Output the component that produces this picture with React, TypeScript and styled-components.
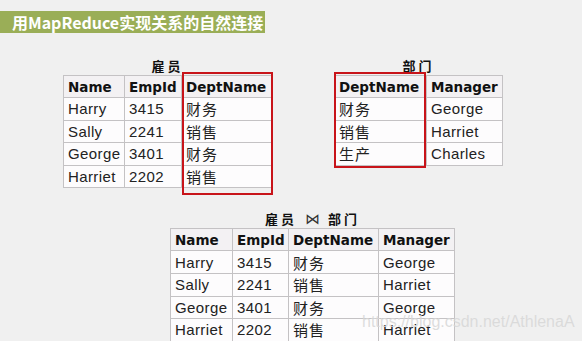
import React from "react";
import styled, { createGlobalStyle } from "styled-components";

const Global = createGlobalStyle`
  html, body { margin: 0; padding: 0; background: #f0f0f0; }
  body { width: 582px; height: 341px; overflow: hidden; }
`;

const Page = styled.div`
  position: relative;
  width: 582px;
  height: 341px;
  padding-top: 11px;
  box-sizing: border-box;
  background: #f0f0f0;
  font-family: "Liberation Sans", "Noto Sans CJK SC", sans-serif;
`;

const TitleBar = styled.div`
  width: 253px;
  height: 22px;
  padding-left: 12px;
  background: #9aae57;
  color: #ffffff;
  font-family: "Noto Sans CJK SC", sans-serif;
  font-weight: 700;
  font-size: 16px;
  line-height: 22px;
  white-space: nowrap;
`;

const Row = styled.div<{ $left: number; $top: number; $gap?: number }>`
  display: flex;
  align-items: flex-start;
  padding-left: ${(p) => p.$left}px;
  margin-top: ${(p) => p.$top}px;
  gap: ${(p) => p.$gap ?? 0}px;
`;

const Block = styled.div`
  display: flex;
  flex-direction: column;
  align-items: center;
`;

const Caption = styled.div`
  height: 16px;
  margin-bottom: 1px;
  font-family: "Noto Sans CJK SC", sans-serif;
  font-weight: 700;
  font-size: 13px;
  line-height: 16px;
  color: #111;
  letter-spacing: 3px;
  display: flex;
  align-items: center;
  gap: 8px;
`;

const Bowtie = styled.span`
  font-family: "DejaVu Sans", sans-serif;
  font-weight: 400;
  font-size: 15px;
  color: #333;
  letter-spacing: 0;
`;

const TableWrap = styled.div`
  position: relative;
`;

const Table = styled.table`
  border-collapse: collapse;
  table-layout: fixed;
  background: #fdfcfd;
`;

const Th = styled.th`
  height: 21px;
  padding: 0 0 0 4px;
  border: 1px solid #c4c2c4;
  background: #f3f1f3;
  font-family: "DejaVu Sans", sans-serif;
  font-weight: 700;
  font-size: 13.5px;
  color: #111;
  text-align: left;
  white-space: nowrap;
  overflow: hidden;
`;

const Td = styled.td<{ $cjk?: boolean }>`
  height: 21.6px;
  padding: 0 0 0 4px;
  border: 1px solid #c4c2c4;
  font-family: ${(p) =>
    p.$cjk
      ? `"Noto Sans CJK SC", sans-serif`
      : `"Liberation Sans", "Noto Sans CJK SC", sans-serif`};
  font-size: 15px;
  letter-spacing: ${(p) => (p.$cjk ? 1 : 0.4)}px;
  color: #222;
  white-space: nowrap;
  overflow: hidden;
  vertical-align: middle;
`;

const Highlight = styled.div<{ $l: number; $t: number; $w: number; $h: number }>`
  position: absolute;
  left: ${(p) => p.$l}px;
  top: ${(p) => p.$t}px;
  width: ${(p) => p.$w}px;
  height: ${(p) => p.$h}px;
  box-sizing: border-box;
  border: 2px solid #c8141a;
  pointer-events: none;
`;

const Watermark = styled.div`
  position: absolute;
  left: 362px;
  top: 313px;
  font-family: "Liberation Sans", sans-serif;
  font-size: 16px;
  color: rgba(215, 215, 215, 0.85);
  white-space: nowrap;
`;

const isCjk = (s: string) => /[\u4e00-\u9fff]/.test(s);

type TableProps = { widths: number[]; head: string[]; rows: string[][] };

const DataTable: React.FC<TableProps> = ({ widths, head, rows }) => (
  <Table>
    <colgroup>
      {widths.map((w, i) => (
        <col key={i} style={{ width: w }} />
      ))}
    </colgroup>
    <thead>
      <tr>
        {head.map((h) => (
          <Th key={h}>{h}</Th>
        ))}
      </tr>
    </thead>
    <tbody>
      {rows.map((r, i) => (
        <tr key={i}>
          {r.map((c, j) => (
            <Td key={j} $cjk={isCjk(c)}>
              {c}
            </Td>
          ))}
        </tr>
      ))}
    </tbody>
  </Table>
);

export default function App() {
  return (
    <>
      <Global />
      <Page>
        <TitleBar>用MapReduce实现关系的自然连接</TitleBar>
        <Row $left={63} $top={25} $gap={62}>
          <Block>
            <Caption>雇员</Caption>
            <TableWrap>
              <DataTable
                widths={[61, 57, 90]}
                head={["Name", "EmpId", "DeptName"]}
                rows={[
                  ["Harry", "3415", "财务"],
                  ["Sally", "2241", "销售"],
                  ["George", "3401", "财务"],
                  ["Harriet", "2202", "销售"],
                ]}
              />
              <Highlight $l={119} $t={-3} $w={91} $h={123} />
            </TableWrap>
          </Block>
          <Block>
            <Caption>部门</Caption>
            <TableWrap>
              <DataTable
                widths={[92, 76]}
                head={["DeptName", "Manager"]}
                rows={[
                  ["财务", "George"],
                  ["销售", "Harriet"],
                  ["生产", "Charles"],
                ]}
              />
              <Highlight $l={0} $t={-3} $w={92} $h={96} />
            </TableWrap>
          </Block>
        </Row>
        <Row $left={170} $top={23}>
          <Block>
            <Caption>
              <span>雇员</span>
              <Bowtie>⋈</Bowtie>
              <span>部门</span>
            </Caption>
            <TableWrap>
              <DataTable
                widths={[62, 56, 90, 76]}
                head={["Name", "EmpId", "DeptName", "Manager"]}
                rows={[
                  ["Harry", "3415", "财务", "George"],
                  ["Sally", "2241", "销售", "Harriet"],
                  ["George", "3401", "财务", "George"],
                  ["Harriet", "2202", "销售", "Harriet"],
                ]}
              />
            </TableWrap>
          </Block>
        </Row>
        <Watermark>https://blog.csdn.net/AthlenaA</Watermark>
      </Page>
    </>
  );
}
